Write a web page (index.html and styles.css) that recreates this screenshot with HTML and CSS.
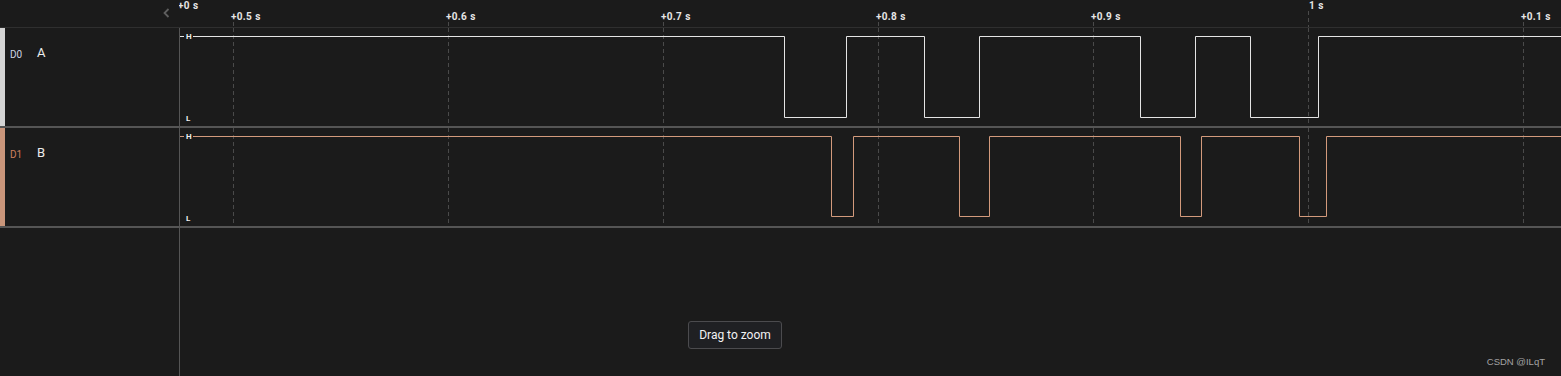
FILE: index.html
```html
<!DOCTYPE html>
<html lang="en">
<head>
  <meta charset="UTF-8">
  <meta name="viewport" content="width=device-width, initial-scale=1.0">
  <title>Logic Analyzer</title>
  <link rel="stylesheet" href="styles.css">
</head>
<body>
  <div class="analyzer">
    <div class="ruler">
      <div class="ruler-side">
        <svg class="chevron" width="7" height="10" viewBox="0 0 7 10">
          <polyline points="5.5,1 1.5,5 5.5,9" fill="none" stroke="#5f5f5f" stroke-width="1.8"/>
        </svg>
      </div>
      <div class="ruler-axis">
        <svg class="ticks" width="1382" height="27">
          <g stroke="#4a4a4a" stroke-dasharray="4 3">
            <line x1="54.5" y1="22" x2="54.5" y2="27"/>
            <line x1="269.5" y1="22" x2="269.5" y2="27"/>
            <line x1="484.5" y1="22" x2="484.5" y2="27"/>
            <line x1="699.5" y1="22" x2="699.5" y2="27"/>
            <line x1="914.5" y1="22" x2="914.5" y2="27"/>
            <line x1="1129.5" y1="11" x2="1129.5" y2="27"/>
            <line x1="1344.5" y1="22" x2="1344.5" y2="27"/>
          </g>
        </svg>
        <span class="tick major" style="left: -1px">+0 s</span>
        <span class="tick" style="left: 52px">+0.5 s</span>
        <span class="tick" style="left: 267px">+0.6 s</span>
        <span class="tick" style="left: 482px">+0.7 s</span>
        <span class="tick" style="left: 697px">+0.8 s</span>
        <span class="tick" style="left: 912px">+0.9 s</span>
        <span class="tick major" style="left: 1130px">1 s</span>
        <span class="tick" style="left: 1342px">+0.1 s</span>
      </div>
    </div>

    <div class="row">
      <div class="row-label">
        <div class="bar bar-d0"></div>
        <span class="chan chan-d0">D0</span>
        <span class="name">A</span>
      </div>
      <div class="trace">
        <svg width="1381" height="98">
          <g stroke="#4a4a4a" stroke-dasharray="4 3">
            <line x1="53.5" y1="0" x2="53.5" y2="98"/>
            <line x1="268.5" y1="0" x2="268.5" y2="98"/>
            <line x1="483.5" y1="0" x2="483.5" y2="98"/>
            <line x1="698.5" y1="0" x2="698.5" y2="98"/>
            <line x1="913.5" y1="0" x2="913.5" y2="98"/>
            <line x1="1128.5" y1="0" x2="1128.5" y2="98"/>
            <line x1="1343.5" y1="0" x2="1343.5" y2="98"/>
          </g>
          <polyline fill="none" stroke="#e4e4e4" stroke-width="1"
            points="0,8.5 604.5,8.5 604.5,89.5 666.5,89.5 666.5,8.5 744.5,8.5 744.5,89.5 799.5,89.5 799.5,8.5 960.5,8.5 960.5,89.5 1015.5,89.5 1015.5,8.5 1070.5,8.5 1070.5,89.5 1138.5,89.5 1138.5,8.5 1381,8.5"/>
          <rect x="4" y="4" width="9" height="9" fill="#1b1b1b"/>
          <text class="level" x="6" y="11">H</text>
          <text class="level" x="6" y="92.5">L</text>
        </svg>
      </div>
    </div>

    <div class="row">
      <div class="row-label">
        <div class="bar bar-d1"></div>
        <span class="chan chan-d1">D1</span>
        <span class="name">B</span>
      </div>
      <div class="trace">
        <svg width="1381" height="98">
          <g stroke="#4a4a4a" stroke-dasharray="4 3">
            <line x1="53.5" y1="0" x2="53.5" y2="98"/>
            <line x1="268.5" y1="0" x2="268.5" y2="98"/>
            <line x1="483.5" y1="0" x2="483.5" y2="98"/>
            <line x1="698.5" y1="0" x2="698.5" y2="98"/>
            <line x1="913.5" y1="0" x2="913.5" y2="98"/>
            <line x1="1128.5" y1="0" x2="1128.5" y2="98"/>
            <line x1="1343.5" y1="0" x2="1343.5" y2="98"/>
          </g>
          <polyline fill="none" stroke="#d39a7c" stroke-width="1"
            points="0,8.5 651.5,8.5 651.5,88.5 673.5,88.5 673.5,8.5 779.5,8.5 779.5,88.5 809.5,88.5 809.5,8.5 1000.5,8.5 1000.5,88.5 1021.5,88.5 1021.5,8.5 1119.5,8.5 1119.5,88.5 1146.5,88.5 1146.5,8.5 1381,8.5"/>
          <rect x="4" y="4" width="9" height="9" fill="#1b1b1b"/>
          <text class="level" x="6" y="11">H</text>
          <text class="level" x="6" y="92.5">L</text>
        </svg>
      </div>
    </div>

    <div class="empty">
      <div class="empty-side"></div>
      <div class="empty-plot">
        <button class="zoom-hint">Drag to zoom</button>
      </div>
      <span class="watermark">CSDN @ILqT</span>
    </div>
  </div>
</body>
</html>
```

FILE: styles.css
```css
body {
  margin: 0;
  background-color: #1b1b1b;
  font-family: Roboto, 'Noto Sans', sans-serif;
  color: #e6e6e6;
  overflow: hidden;
}
.analyzer {
  width: 1561px;
  height: 376px;
  display: flex;
  flex-direction: column;
}
.ruler {
  display: flex;
  height: 27px;
  border-bottom: 1px solid #2f2f2f;
}
.ruler-side {
  width: 170px;
  padding-right: 9px;
  display: flex;
  justify-content: flex-end;
  padding-top: 8px;
}
.chevron {
  display: block;
}
.ruler-axis {
  flex: 1;
  position: relative;
  overflow: hidden;
}
.ticks {
  display: block;
  position: absolute;
  left: 0;
  top: 0;
}
.tick {
  position: absolute;
  top: 11px;
  font-size: 10px;
  font-weight: bold;
  letter-spacing: 0.3px;
  word-spacing: 0.5px;
  color: #e6e6e6;
  white-space: nowrap;
  line-height: 11px;
}
.tick.major {
  top: 0;
}
.row {
  display: flex;
  height: 98px;
  border-bottom: 2px solid #555;
}
.row-label {
  width: 179px;
  display: flex;
  align-items: flex-start;
}
.bar {
  width: 5px;
  height: 100%;
}
.bar-d0 {
  background-color: #d4d4d4;
}
.bar-d1 {
  background-color: #c9957a;
}
.chan {
  font-size: 10px;
  margin-left: 5px;
  margin-top: 21px;
  width: 27px;
}
.chan-d0 {
  color: #cdd5e2;
}
.chan-d1 {
  color: #cf7f5f;
}
.name {
  font-size: 13px;
  margin-top: 17px;
  color: #ececec;
}
.trace {
  flex: 1;
  border-left: 1px solid #555;
}
.trace svg {
  display: block;
}
.level {
  font-family: Roboto, sans-serif;
  font-size: 8px;
  font-weight: bold;
  fill: #f0f0f0;
}
.empty {
  flex: 1;
  display: flex;
  position: relative;
}
.empty-side {
  width: 179px;
}
.empty-plot {
  flex: 1;
  border-left: 1px solid #555;
  padding-left: 508px;
  padding-top: 93px;
}
.zoom-hint {
  height: 28px;
  width: 94px;
  padding: 0;
  background-color: #1f2023;
  border: 1px solid #4b4b4e;
  border-radius: 3px;
  color: #f2f2f2;
  font-family: Roboto, sans-serif;
  font-size: 12px;
  display: block;
}
.watermark {
  position: absolute;
  right: 16px;
  bottom: 9px;
  font-family: 'Liberation Sans', Arial, sans-serif;
  font-size: 9.5px;
  color: #a3a3a3;
}
```
